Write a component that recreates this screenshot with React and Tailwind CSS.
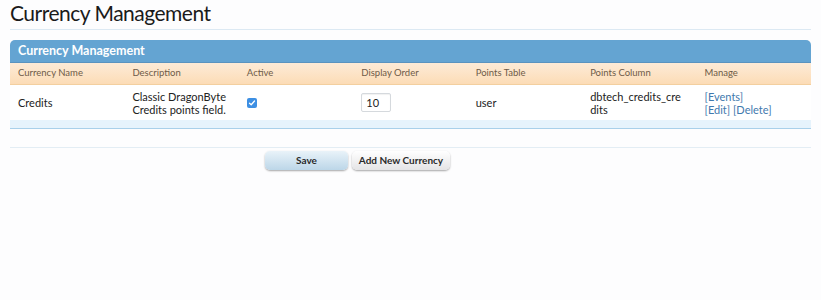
import React from 'react';

const columns = ['Currency Name', 'Description', 'Active', 'Display Order', 'Points Table', 'Points Column', 'Manage'];

export default function App() {
  return (
    <div className="min-h-[300px] w-[821px] bg-[#fdfdfe] font-['Lato',sans-serif] text-[#222]">
      {/* Page title */}
      <div className="mx-[10px] h-[30px] border-b border-[#dce9f3]">
        <h1 className="text-[21px] leading-[26px] tracking-[-0.5px] text-[#1a1a1a]">Currency Management</h1>
      </div>

      {/* Panel */}
      <div className="mx-[10px] mt-[10px]">
        <div className="flex h-[23px] items-center rounded-t-[5px] border-b border-[#5a93bf] bg-[#64a4d2] px-2 text-[12.5px] font-bold text-white">
          Currency Management
        </div>
        <div className="grid h-[22px] grid-cols-7 items-center border-b border-[#f3cf9f] bg-gradient-to-b from-[#fdebd7] to-[#fcdcb6] text-[9.5px] text-[#6e5b48]">
          {columns.map(c => (
            <div key={c} className="px-2">{c}</div>
          ))}
        </div>
        <div className="grid h-[35px] grid-cols-7 items-center bg-white text-[11px] leading-[13px]">
          <div className="px-2">Credits</div>
          <div className="px-2">Classic DragonByte<br />Credits points field.</div>
          <div className="px-2">
            <span className="flex h-[10px] w-[10px] items-center justify-center rounded-[2px] bg-[#3d8fe3]">
              <svg width="8" height="8" viewBox="0 0 8 8">
                <path d="M1.5 4.2 L3.2 5.8 L6.5 2" fill="none" stroke="white" strokeWidth="1.3" strokeLinecap="round" strokeLinejoin="round" />
              </svg>
            </span>
          </div>
          <div className="px-2">
            <div className="flex h-[19px] w-[30px] items-center rounded-[2px] border border-[#d5d9dd] bg-white px-[4px] shadow-[inset_0_1px_1px_rgba(0,0,0,0.06)]">10</div>
          </div>
          <div className="px-2">user</div>
          <div className="px-2">dbtech_credits_cre<br />dits</div>
          <div className="px-2 text-[#3f79ae]">
            <a>[Events]</a><br />
            <a>[Edit]</a> <a>[Delete]</a>
          </div>
        </div>
        <div className="h-[9px] border-b border-[#a9d0ea] bg-[#e6f3fc]" />
      </div>

      {/* Form buttons */}
      <div className="mx-[10px] mt-[18px] border-t border-[#e3edf4] pt-[3px]">
        <div className="flex gap-[4px] pl-[255px]">
          <button className="h-[19px] w-[83px] rounded-[5px] bg-gradient-to-b from-[#e9f3f9] to-[#bcd6e8] text-[10px] font-bold text-[#2a2a2a] shadow-[0_1px_2px_rgba(0,0,0,0.35)]">
            Save
          </button>
          <button className="h-[19px] w-[98px] rounded-[5px] bg-gradient-to-b from-white to-[#e4e4e6] text-[10px] font-bold text-[#2a2a2a] shadow-[0_1px_2px_rgba(0,0,0,0.35)]">
            Add New Currency
          </button>
        </div>
      </div>
    </div>
  );
}
